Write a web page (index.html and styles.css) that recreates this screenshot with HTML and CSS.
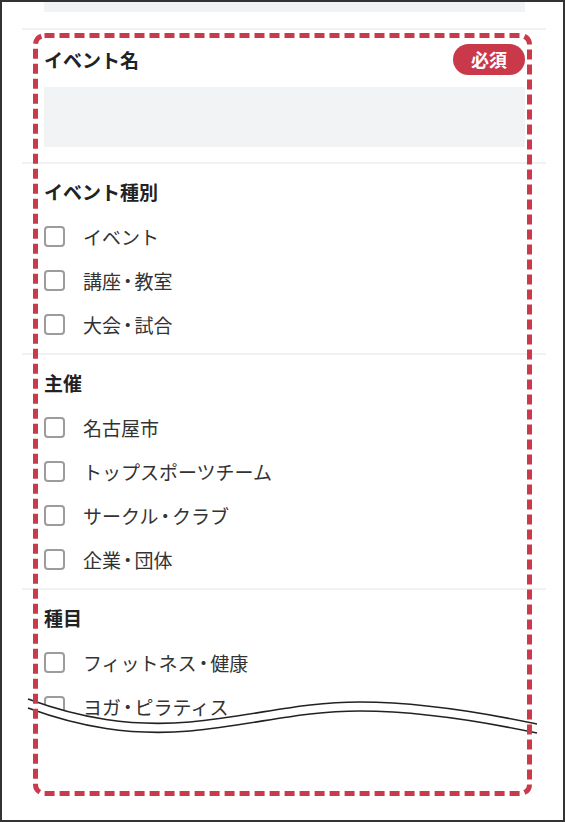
FILE: index.html
```html
<!DOCTYPE html>
<html>
	<head>
		<meta charset="UTF-8">
		<title>検索フォーム</title>
		<link rel="stylesheet" href="styles.css">
	</head>
	<body>
		<div class="frame">
			<div class="form">
				<div class="field field-top">
					<div class="input"></div>
				</div>
				<div class="field">
					<div class="head">
						<strong>イベント名</strong>
						<span class="badge">必須</span>
					</div>
					<div class="input input-name"></div>
				</div>
				<div class="field">
					<div class="head"><strong>イベント種別</strong></div>
					<ul class="checks">
						<li><input type="checkbox"><span>イベント</span></li>
						<li><input type="checkbox"><span>講座<i>・</i>教室</span></li>
						<li><input type="checkbox"><span>大会<i>・</i>試合</span></li>
					</ul>
				</div>
				<div class="field">
					<div class="head"><strong>主催</strong></div>
					<ul class="checks">
						<li><input type="checkbox"><span>名古屋市</span></li>
						<li><input type="checkbox"><span>トップスポーツチーム</span></li>
						<li><input type="checkbox"><span>サークル<i>・</i>クラブ</span></li>
						<li><input type="checkbox"><span>企業<i>・</i>団体</span></li>
					</ul>
				</div>
				<div class="field">
					<div class="head"><strong>種目</strong></div>
					<ul class="checks">
						<li><input type="checkbox"><span>フィットネス<i>・</i>健康</span></li>
						<li><input type="checkbox"><span>ヨガ<i>・</i>ピラティス</span></li>
					</ul>
				</div>
			</div>
			<!-- 省略の波線と注釈の点線枠 -->
			<svg class="mark" width="565" height="822" viewBox="0 0 565 822">
				<path d="M28,699 C80,718 130,727 190,722 C260,715 300,702 360,702 C420,702 480,712 537,724 L537,780 L28,780 Z" fill="#fff"/>
				<path d="M28,699 C80,718 130,727 190,722 C260,715 300,702 360,702 C420,702 480,712 537,724" fill="none" stroke="#222" stroke-width="1.6"/>
				<path d="M28,708 C80,727 130,736 190,731 C260,724 300,711 360,711 C420,711 480,721 537,733" fill="none" stroke="#222" stroke-width="1.6"/>
				<rect x="35.5" y="35.5" width="494" height="758" rx="9" fill="none" stroke="#cb3a4b" stroke-width="5" stroke-dasharray="10 5"/>
			</svg>
		</div>
	</body>
</html>
```

FILE: styles.css
```css
* {margin: 0;padding: 0;box-sizing: border-box;}
body {background: #fff;font-family: "Noto Sans CJK JP", "Noto Sans", sans-serif;}
.frame {position: relative;width: 565px;height: 822px;border: 2px solid #333;overflow: hidden;}
.form {padding: 0 17px 0 20px;}
.field {padding: 14px 21px 7px 22px;border-top: 2px solid #f0f1f3;}
.field-top {padding: 0 21px 16px 22px;border-top: 0;}
.input {height: 10px;background: #f2f3f5;}
.input-name {height: 60px;margin: 12px 0 8px;}
.head {display: flex;align-items: center;justify-content: space-between;min-height: 28px;}
.head strong {font-size: 19px;line-height: 28px;font-weight: bold;color: #222;}
.badge {display: block;height: 31px;padding: 0 18px;border-radius: 16px;background: #c9394a;color: #fff;font-size: 18px;line-height: 31px;font-weight: bold;}
.checks {list-style: none;margin-top: 8px;}
.checks li {display: flex;align-items: center;height: 44px;}
.checks input {appearance: none;-webkit-appearance: none;width: 21px;height: 21px;border: 2px solid #9c9c9c;border-radius: 4px;background: #fff;margin: 0 18px 0 0;flex: none;}
.checks span {font-size: 19px;color: #333;}
.checks i {font-style: normal;font-feature-settings: "halt";padding: 0 2px;}
.mark {position: absolute;left: -2px;top: -2px;pointer-events: none;}
```
